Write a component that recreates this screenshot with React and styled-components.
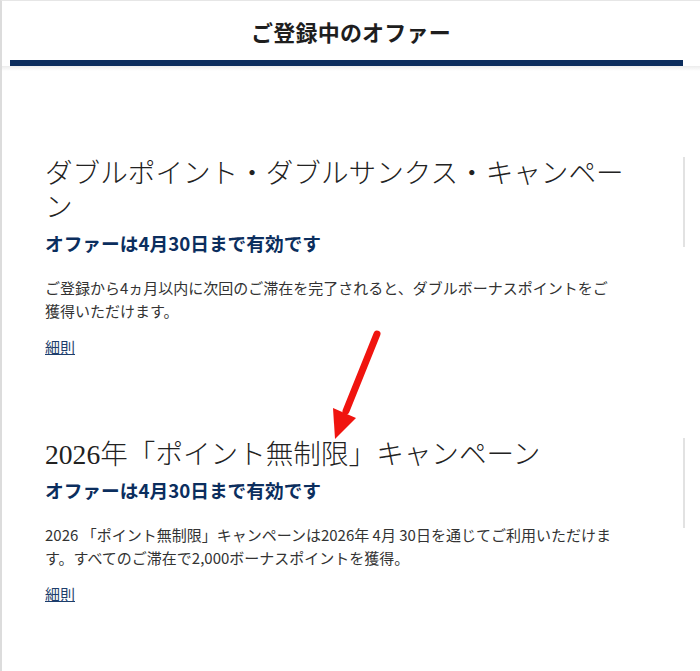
import styled, { createGlobalStyle } from "styled-components";

const GlobalStyle = createGlobalStyle`
  html, body {
    margin: 0;
    padding: 0;
    background: #ffffff;
  }
  * {
    box-sizing: border-box;
  }
`;

const Page = styled.div`
  position: relative;
  width: 700px;
  height: 671px;
  overflow: hidden;
  background: #ffffff;
  border-left: 2px solid #dcdcdc;
  border-top: 1px solid #e6e6e6;
  font-family: "Noto Sans CJK JP", "Noto Sans", sans-serif;
`;

const Header = styled.header`
  display: flex;
  flex-direction: column;
`;

const HeaderTitle = styled.h1`
  margin: 0;
  height: 59px;
  display: flex;
  align-items: center;
  justify-content: center;
  font-size: 22px;
  font-weight: 700;
  color: #1e1e1e;
  letter-spacing: 0.2px;
`;

const HeaderBar = styled.div`
  height: 6px;
  margin: 0 17px 0 8px;
  background: #0b2c5c;
`;

const HeaderShadow = styled.div`
  height: 5px;
  background: linear-gradient(#ececec, rgba(255, 255, 255, 0));
`;

const OfferList = styled.main`
  display: flex;
  flex-direction: column;
  gap: 80px;
  padding-top: 86px;
`;

const Card = styled.section`
  display: flex;
  justify-content: space-between;
  align-items: flex-start;
  padding: 0 15px 0 43px;
`;

const Content = styled.div`
  width: 592px;
  display: flex;
  flex-direction: column;
`;

const Divider = styled.div`
  width: 2px;
  height: 90px;
  background: #e2e2e2;
`;

const OfferTitle = styled.h2`
  margin: 0;
  font-family: "Liberation Serif", "Noto Sans CJK JP", serif;
  font-size: 27.6px;
  font-weight: 300;
  line-height: 34px;
  color: #222222;
`;

const Validity = styled.p`
  margin: 4px 0 0;
  font-size: 18.7px;
  font-weight: 700;
  line-height: 28px;
  color: #0b2e5e;
`;

const Description = styled.p`
  max-width: 575px;
  margin: 19px 0 0;
  font-size: 15px;
  line-height: 23px;
  color: #333333;
`;

const TermsLink = styled.a`
  align-self: flex-start;
  margin-top: 13px;
  font-size: 15px;
  line-height: 23px;
  color: #1d3e6c;
  text-decoration: underline;
  cursor: pointer;
`;

const Arrow = styled.svg`
  position: absolute;
  left: 0;
  top: 0;
  pointer-events: none;
`;

const offers = [
  {
    title: "ダブルポイント・ダブルサンクス・キャンペーン",
    validity: "オファーは4月30日まで有効です",
    text: "ご登録から4ヵ月以内に次回のご滞在を完了されると、ダブルボーナスポイントをご獲得いただけます。",
  },
  {
    title: "2026年「ポイント無制限」キャンペーン",
    validity: "オファーは4月30日まで有効です",
    text: "2026 「ポイント無制限」キャンペーンは2026年 4月 30日を通じてご利用いただけます。すべてのご滞在で2,000ボーナスポイントを獲得。",
  },
];

const App = () => {
  return (
    <Page>
      <GlobalStyle />
      <Header>
        <HeaderTitle>ご登録中のオファー</HeaderTitle>
        <HeaderBar />
        <HeaderShadow />
      </Header>
      <OfferList>
        {offers.map((offer) => (
          <Card key={offer.title}>
            <Content>
              <OfferTitle>{offer.title}</OfferTitle>
              <Validity>{offer.validity}</Validity>
              <Description>{offer.text}</Description>
              <TermsLink>細則</TermsLink>
            </Content>
            <Divider />
          </Card>
        ))}
      </OfferList>
      <Arrow width="700" height="671" viewBox="0 0 700 671">
        <line
          x1="375"
          y1="333"
          x2="344"
          y2="410"
          stroke="#f0140f"
          strokeWidth="7"
          strokeLinecap="round"
        />
        <polygon points="331,407 354,417 333,438" fill="#f0140f" />
      </Arrow>
    </Page>
  );
};

export default App;
